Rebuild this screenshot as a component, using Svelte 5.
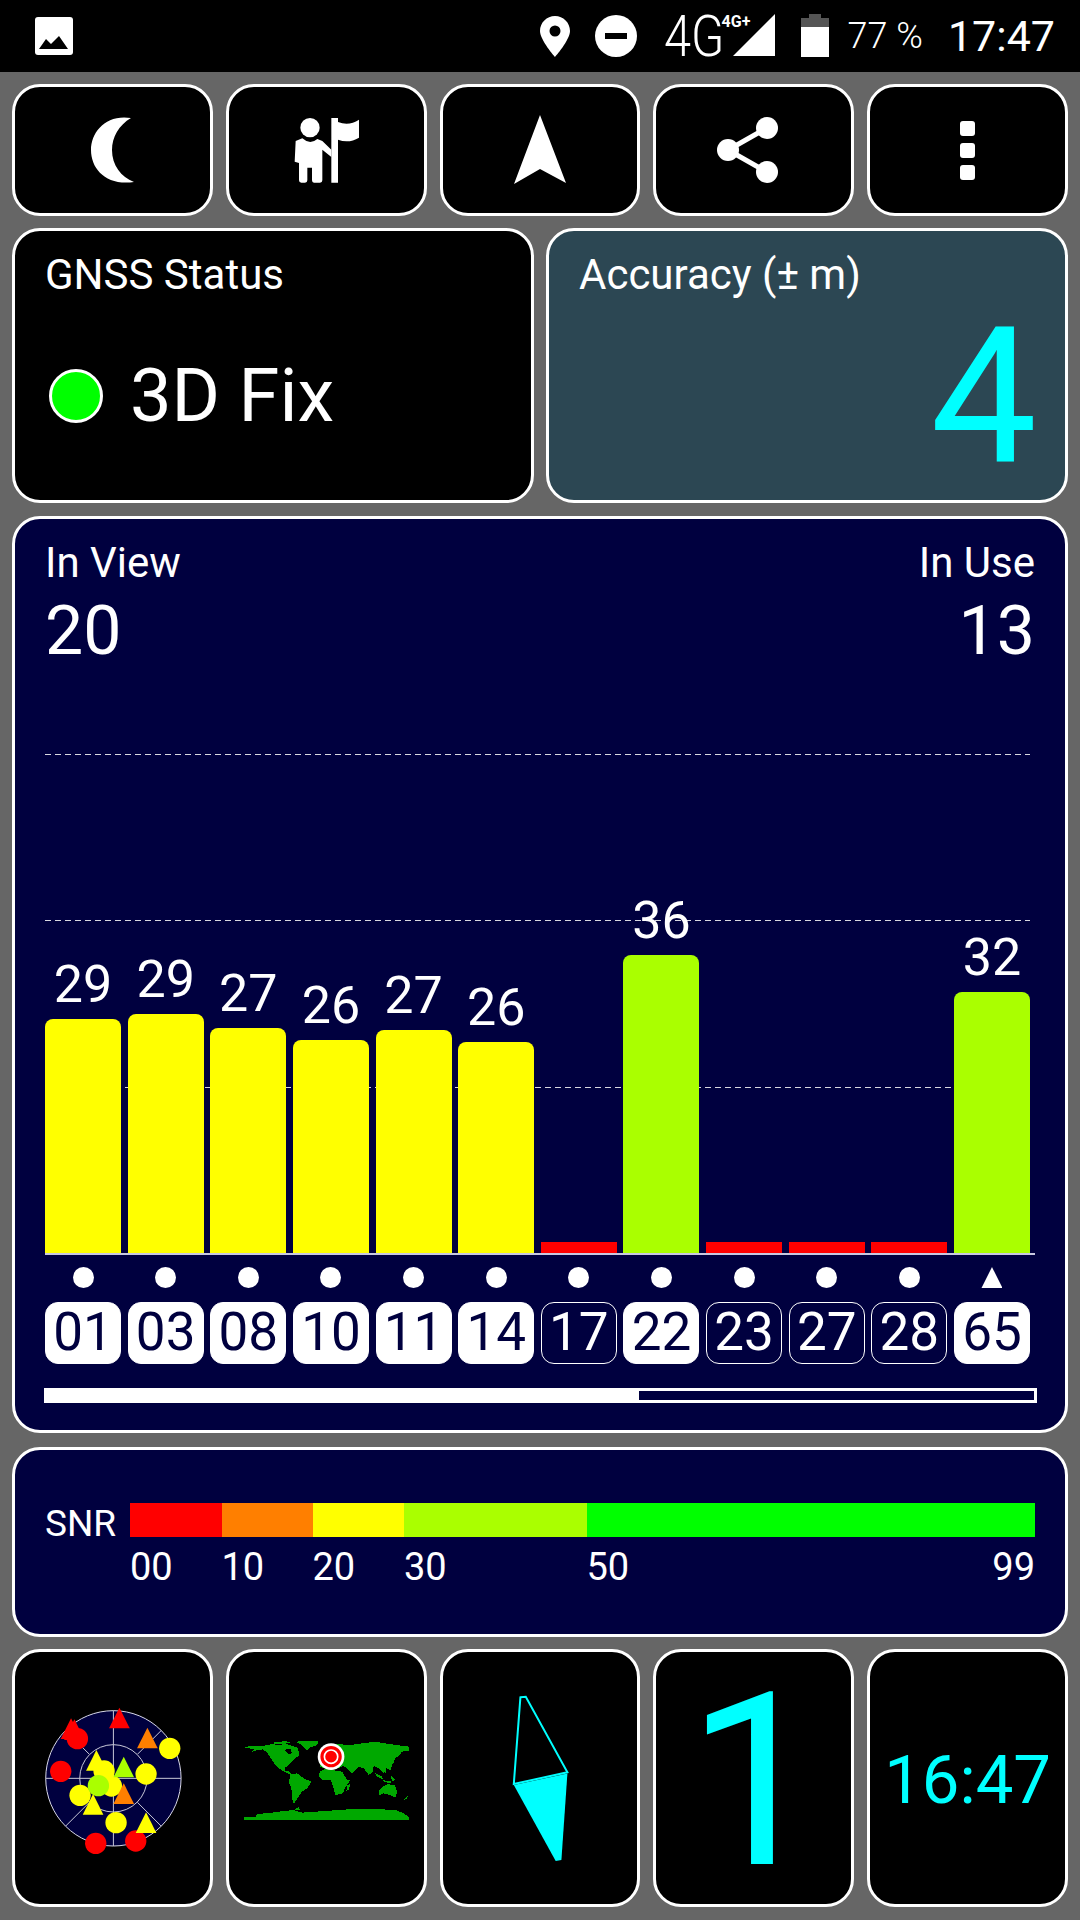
<script>
    const sats = [
        { id: '01', snr: 29, h: 234, color: '#ffff00', used: true },
        { id: '03', snr: 29, h: 239, color: '#ffff00', used: true },
        { id: '08', snr: 27, h: 225, color: '#ffff00', used: true },
        { id: '10', snr: 26, h: 213, color: '#ffff00', used: true },
        { id: '11', snr: 27, h: 223, color: '#ffff00', used: true },
        { id: '14', snr: 26, h: 211, color: '#ffff00', used: true },
        { id: '17', snr: null, h: 11, color: '#ff0000', used: false },
        { id: '22', snr: 36, h: 298, color: '#aaff00', used: true },
        { id: '23', snr: null, h: 11, color: '#ff0000', used: false },
        { id: '27', snr: null, h: 11, color: '#ff0000', used: false },
        { id: '28', snr: null, h: 11, color: '#ff0000', used: false },
        { id: '65', snr: 32, h: 261, color: '#aaff00', used: true, tri: true }
    ];

    // sky plot markers, in the radar svg's coordinates
    const skyDots = [
        [231, 296, '#ff0000'], [508, 325, '#ffff00'], [181, 394, '#ff0000'], [311, 393, '#ffff00'],
        [437, 402, '#ffff00'], [333, 438, '#ffff00'], [239, 466, '#ffff00'], [294, 437, '#aaff00'],
        [347, 548, '#ffff00'], [286, 610, '#ff0000'], [406, 603, '#ff0000']
    ];
    const skyTris = [
        [357, 203, '#ff0000'], [212, 235, '#ff0000'], [222, 238, '#ff0000'], [441, 263, '#ff7f00'],
        [288, 330, '#ffff00'], [370, 350, '#aaff00'], [370, 430, '#ff7f00'], [278, 462, '#ffff00'],
        [437, 517, '#ffff00']
    ];
    const triPoints = (x, y) => `${x},${y} ${x + 31},${y + 62} ${x - 31},${y + 62}`;

    const land = [
        '25,52 45,48 80,48 110,42 130,46 150,41 170,48 185,52 192,68 190,78 178,85 165,98 158,108 150,112 148,122 158,122 170,135 160,132 140,122 122,108 108,88 95,68 82,58 60,62 45,68 55,58 40,55',
        '178,35 250,32 245,45 225,52 215,62 205,52 195,42',
        '112,38 150,33 165,38 140,43 118,43',
        '165,135 185,130 205,145 228,155 215,175 200,185 190,200 175,222 170,205 168,175 160,155',
        '253,125 280,112 300,122 320,125 335,150 345,150 330,172 322,190 300,195 292,165 285,150 262,150 250,140',
        '255,112 250,85 258,62 300,42 345,45 380,40 420,35 460,42 522,50 520,62 500,65 495,72 480,85 470,105 465,120 452,115 445,130 430,115 415,108 412,125 400,135 385,115 370,110 350,130 340,120 325,108 300,118',
        '335,165 345,162 340,180 333,182',
        '420,130 440,140 445,150 425,140',
        '440,150 470,155 465,160 445,155',
        '465,135 480,150 470,155',
        '445,118 452,122 450,132',
        '470,90 476,98 465,110',
        '432,180 445,168 460,162 470,165 478,165 485,185 480,203 465,195 445,190 432,195',
        '505,210 518,197 515,207',
        '25,262 60,262 65,252 110,248 130,245 175,240 200,248 240,245 270,243 340,238 400,236 480,240 505,250 522,262 522,270 25,270',
        '175,238 190,232 195,240'
    ];
</script>

<div class="screen">
    <header class="status">
        <svg class="gallery" viewBox="0 0 38 38" width="38" height="38">
            <rect width="38" height="38" rx="3" fill="#fff" />
            <path d="M4 32 L11 22 L16 27 L24 19 L33 32 Z" fill="#000" />
        </svg>
        <div class="spacer"></div>
        <svg class="pin" viewBox="0 0 30 41" width="30" height="41">
            <path fill="#fff" fill-rule="evenodd" d="M15 0C6.7 0 0 6.7 0 15 0 24 15 41 15 41S30 24 30 15C30 6.700 23.300 0 15 0ZM15 9.500A5.500 5.500 0 1 1 15 20.500 5.500 5.500 0 1 1 15 9.500Z" />
        </svg>
        <svg class="dnd" viewBox="0 0 42 42" width="42" height="42">
            <circle cx="21" cy="21" r="21" fill="#fff" />
            <rect x="10" y="18" width="22" height="6" fill="#000" />
        </svg>
        <div class="net">
            <span class="net-big">4G</span>
            <span class="net-small">4G+</span>
        </div>
        <svg class="signal" viewBox="0 0 42 42" width="42" height="42">
            <path d="M0 42 L42 0 V42 Z" fill="#fff" />
        </svg>
        <svg class="battery" viewBox="0 0 28 43" width="28" height="43">
            <rect x="8" width="12" height="5" fill="#555" />
            <rect y="4" width="28" height="10" fill="#555" />
            <rect y="13" width="28" height="30" fill="#fff" />
        </svg>
        <span class="pct">77 %</span>
        <span class="clock">17:47</span>
    </header>

    <main class="content">
        <div class="toolbar">
            <div class="card tool">
                <svg viewBox="0 0 43 66" width="43" height="66">
                    <path fill="#fff" d="M40 1C15-3 0 15 0 33 0 52 15 69 43 65 30 60 21 48 21 33 21 20 28 8 40 1Z" />
                </svg>
            </div>
            <div class="card tool">
                <svg viewBox="820 83 195 195" width="65" height="65">
                    <circle cx="868" cy="112" r="29" fill="#fff" />
                    <path fill="#fff" d="M825 152 845 144Q868 165 890 146L905 152 932 178V200L905 178V270Q905 277 898 277H880Q874 277 874 270V232H860V270Q860 277 853 277H842Q835 277 835 270V218L822 214Z" />
                    <path fill="#fff" d="M932 83H952V95Q985 108 1015 88V142Q985 160 952 148V277H932Z" />
                </svg>
            </div>
            <div class="card tool">
                <svg viewBox="0 0 52 70" width="52" height="70">
                    <path fill="#fff" d="M26 0 52 68 26 54 0 69Z" />
                </svg>
            </div>
            <div class="card tool">
                <svg viewBox="0 0 74 66" width="74" height="66">
                    <g fill="#fff">
                        <circle cx="50" cy="11" r="11" />
                        <circle cx="11" cy="33" r="11" />
                        <circle cx="50" cy="55" r="11" />
                    </g>
                    <path d="M50 11 11 33 50 55" fill="none" stroke="#fff" stroke-width="5" />
                </svg>
            </div>
            <div class="card tool">
                <svg viewBox="0 0 15 59" width="15" height="59">
                    <rect width="15" height="15" rx="3" fill="#fff" />
                    <rect y="22" width="15" height="15" rx="3" fill="#fff" />
                    <rect y="44" width="15" height="15" rx="3" fill="#fff" />
                </svg>
            </div>
        </div>

        <div class="summary">
            <div class="card gnss">
                <div class="label">GNSS Status</div>
                <div class="fix">
                    <span class="fix-dot"></span>
                    <span class="fix-text">3D Fix</span>
                </div>
            </div>
            <div class="card accuracy">
                <div class="label">Accuracy (± m)</div>
                <div class="acc-value">4</div>
            </div>
        </div>

        <section class="card panel sats">
            <div class="counts">
                <div>
                    <div class="label">In View</div>
                    <div class="count">20</div>
                </div>
                <div class="right">
                    <div class="label">In Use</div>
                    <div class="count">13</div>
                </div>
            </div>

            <div class="chart">
                <div class="gridline g1"></div>
                <div class="gridline g2"></div>
                <div class="gridline g3"></div>
                <div class="cols bars">
                    {#each sats as s}
                        <div class="bar-col">
                            {#if s.snr !== null}<span class="snr">{s.snr}</span>{/if}
                            <div class={s.snr !== null ? 'bar' : 'bar low'} style="height: {s.h}px; background: {s.color}"></div>
                        </div>
                    {/each}
                </div>
            </div>

            <div class="cols marks">
                {#each sats as s}
                    <span class={s.tri ? 'mark tri' : 'mark'}></span>
                {/each}
            </div>

            <div class="cols pills">
                {#each sats as s}
                    <span class={s.used ? 'pill used' : 'pill'}>{s.id}</span>
                {/each}
            </div>

            <div class="progress"><div class="progress-fill"></div></div>
        </section>

        <section class="card panel legend">
            <div class="snr-row">
                <span class="snr-label">SNR</span>
                <div class="scale-col">
                    <div class="scale bar-scale">
                        <span class="s1"></span>
                        <span class="s2"></span>
                        <span class="s3"></span>
                        <span class="s4"></span>
                        <span class="s5"></span>
                    </div>
                    <div class="scale ticks">
                        <span>00</span>
                        <span>10</span>
                        <span>20</span>
                        <span>30</span>
                        <span class="last"><span>50</span><span>99</span></span>
                    </div>
                </div>
            </div>
        </section>

        <div class="tiles">
            <div class="card tile">
                <svg viewBox="45 36 582 756">
                    <circle cx="339" cy="415" r="203" fill="#00003f" stroke="#d8d8e8" stroke-width="3" />
                    <circle cx="339" cy="415" r="101" fill="none" stroke="#c8c8d8" stroke-width="3" />
                    <g stroke="#c8c8d8" stroke-width="3">
                        <line x1="339" y1="212" x2="339" y2="618" />
                        <line x1="136" y1="415" x2="542" y2="415" />
                        <line x1="411" y1="343" x2="483" y2="271" />
                        <line x1="411" y1="487" x2="483" y2="559" />
                        <line x1="267" y1="487" x2="195" y2="559" />
                        <line x1="267" y1="343" x2="195" y2="271" />
                    </g>
                    {#each skyTris.slice(0, 3) as t}
                        <polygon points={triPoints(t[0], t[1])} fill={t[2]} />
                    {/each}
                    {#each skyDots as d}
                        <circle cx={d[0]} cy={d[1]} r="32" fill={d[2]} />
                    {/each}
                    {#each skyTris.slice(3) as t}
                        <polygon points={triPoints(t[0], t[1])} fill={t[2]} />
                    {/each}
                </svg>
            </div>
            <div class="card tile">
                <svg viewBox="-18 -234 582 756">
                    <g fill="#00a800" shape-rendering="crispEdges">
                        {#each land as pts}
                            <polygon points={pts} />
                        {/each}
                    </g>
                    <polygon points="148,60 165,55 170,70 160,72" fill="#000" shape-rendering="crispEdges" />
                    <circle cx="287" cy="80" r="40" fill="#fff" />
                    <circle cx="287" cy="80" r="32" fill="#ff0000" />
                    <circle cx="287" cy="80" r="20" fill="none" stroke="#fff" stroke-width="5" />
                </svg>
            </div>
            <div class="card tile">
                <svg viewBox="443 1652 194 252">
                    <polygon points="520,1697.300 525.400,1696.700 567,1772.300 513.400,1784" fill="none" stroke="#00ffff" stroke-width="2" />
                    <polygon points="513.400,1785 567,1773.500 561,1860 555.300,1861" fill="#00ffff" />
                </svg>
            </div>
            <div class="card tile big-one">1</div>
            <div class="card tile utc">16:47</div>
        </div>
    </main>
</div>

<style>
    :global(body) {
        margin: 0;
        background: #666;
    }

    .screen {
        width: 1080px;
        height: 1920px;
        background: #666;
        font-family: Roboto, "Liberation Sans", sans-serif;
        color: #fff;
        overflow: hidden;
    }

    .status {
        height: 72px;
        background: #000;
        display: flex;
        align-items: center;
        padding: 0 25px 0 35px;
        box-sizing: border-box;
    }

    .spacer {
        flex: 1;
    }

    .gallery {
        margin-top: -1px;
    }

    .pin {
        margin-top: 1px;
    }

    .dnd {
        margin-left: 25px;
    }

    .net {
        margin-left: 27px;
        width: 56px;
        height: 48px;
        position: relative;
    }

    .net-big {
        position: absolute;
        left: 0;
        top: -9px;
        font-size: 58px;
        font-weight: 300;
        line-height: 66px;
        transform: scaleX(0.84);
        transform-origin: left center;
    }

    .net-small {
        position: absolute;
        left: 58px;
        top: 1px;
        font-size: 16px;
        font-weight: 700;
        line-height: 18px;
    }

    .signal {
        margin-left: 13px;
        margin-top: -2px;
    }

    .battery {
        margin-left: 26px;
        margin-top: -1px;
    }

    .pct {
        margin-left: 19px;
        font-size: 36px;
        font-weight: 300;
    }

    .clock {
        margin-left: 25px;
        font-size: 43px;
        font-weight: 400;
    }

    .content {
        padding: 12px;
        display: flex;
        flex-direction: column;
    }

    .card {
        background: #000;
        border: 3px solid #fff;
        border-radius: 28px;
        box-sizing: border-box;
    }

    .toolbar,
    .tiles {
        display: grid;
        grid-template-columns: repeat(5, 1fr);
        gap: 13px;
    }

    .tool {
        height: 132px;
        display: flex;
        align-items: center;
        justify-content: center;
    }

    .summary {
        margin-top: 12px;
        display: grid;
        grid-template-columns: 1fr 1fr;
        grid-template-rows: 275px;
        gap: 12px;
    }

    .label {
        font-size: 42px;
        line-height: 47px;
    }

    .gnss,
    .accuracy {
        padding: 20px 30px;
        min-height: 0;
    }

    .accuracy {
        background: #2c4753;
        display: flex;
        flex-direction: column;
        padding-right: 28px;
    }

    .fix {
        margin-top: 56px;
        display: flex;
        align-items: center;
        gap: 27px;
        padding-left: 4px;
    }

    .fix-dot {
        width: 54px;
        height: 54px;
        box-sizing: border-box;
        border: 3px solid #fff;
        border-radius: 50%;
        background: #00ff00;
    }

    .fix-text {
        font-size: 74px;
        line-height: 84px;
    }

    .acc-value {
        align-self: flex-end;
        margin-top: 3px;
        font-size: 190px;
        line-height: 190px;
        color: #00ffff;
    }

    .panel {
        background: #00003f;
    }

    .sats {
        margin-top: 13px;
        height: 917px;
        padding: 0 30px;
    }

    .counts {
        display: flex;
        justify-content: space-between;
        padding-top: 20px;
        height: 183px;
        box-sizing: border-box;
    }

    .right {
        text-align: right;
    }

    .count {
        font-size: 68px;
        line-height: 74px;
        margin-top: 8px;
    }

    .chart {
        position: relative;
        height: 553px;
        border-bottom: 2px solid #c8c8e0;
        box-sizing: border-box;
    }

    .gridline {
        position: absolute;
        left: 0;
        width: 985px;
        height: 1px;
        background: repeating-linear-gradient(to right, #d8d8e0 0 6px, transparent 6px 10px);
    }

    .g1 { top: 52px; }
    .g2 { top: 218px; }
    .g3 { top: 385px; }

    .cols {
        display: grid;
        grid-template-columns: repeat(12, 1fr);
        column-gap: 6.600px;
        width: 985px;
    }

    .bars {
        position: relative;
        height: 100%;
        align-items: end;
    }

    .bar-col {
        display: flex;
        flex-direction: column;
        align-items: center;
    }

    .snr {
        font-size: 52px;
        line-height: 52px;
        margin-bottom: 8px;
    }

    .bar {
        width: 100%;
        border-radius: 8px 8px 0 0;
    }

    .bar.low {
        border-radius: 0;
    }

    .marks {
        margin-top: 12px;
        height: 21px;
        justify-items: center;
    }

    .mark {
        width: 21px;
        height: 21px;
        background: #fff;
        border-radius: 50%;
    }

    .mark.tri {
        border-radius: 0;
        clip-path: polygon(50% 0, 100% 100%, 0 100%);
    }

    .pills {
        margin-top: 14px;
    }

    .pill {
        height: 62px;
        box-sizing: border-box;
        border: 1.500px solid #fff;
        border-radius: 13px;
        font-size: 53px;
        line-height: 59px;
        text-align: center;
    }

    .pill.used {
        background: #fff;
        color: #00003f;
    }

    .progress {
        margin-top: 24px;
        width: 993px;
        margin-left: -1px;
        height: 15px;
        box-sizing: border-box;
        border: 3px solid #fff;
    }

    .progress-fill {
        width: 60%;
        height: 100%;
        background: #fff;
    }

    .legend {
        margin-top: 14px;
        height: 190px;
        padding: 53px 30px 0;
    }

    .snr-row {
        display: flex;
        gap: 13px;
    }

    .snr-label {
        font-size: 37px;
        line-height: 42px;
        width: 72px;
    }

    .scale-col {
        flex: 1;
    }

    .scale {
        display: grid;
        grid-template-columns: 91.500px 91px 91.500px 182.500px 1fr;
    }

    .bar-scale {
        height: 34px;
    }

    .s1 { background: #ff0000; }
    .s2 { background: #ff7f00; }
    .s3 { background: #ffff00; }
    .s4 { background: #aaff00; }
    .s5 { background: #00ff00; }

    .ticks {
        margin-top: 9px;
        font-size: 38px;
        line-height: 42px;
    }

    .last {
        display: flex;
        justify-content: space-between;
    }

    .tiles {
        margin-top: 12px;
    }

    .tile {
        height: 258px;
        display: flex;
        align-items: center;
        justify-content: center;
    }

    .tile svg {
        width: 100%;
        height: 100%;
    }

    .big-one {
        font-size: 242px;
        line-height: 242px;
        color: #00ffff;
        padding-top: 5px;
        padding-left: 2px;
    }

    .utc {
        font-size: 67px;
        color: #00ffff;
        padding-top: 4px;
    }
</style>
